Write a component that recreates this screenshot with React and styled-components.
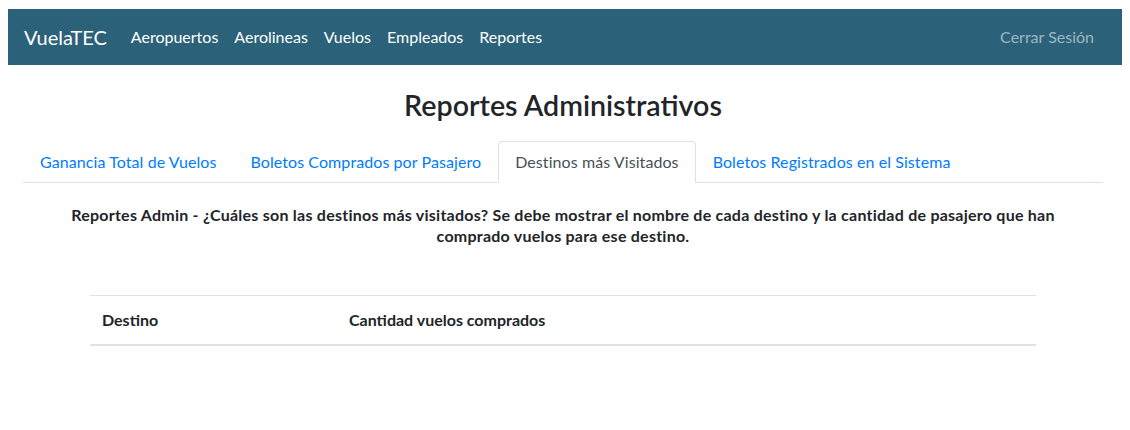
import React from "react";
import styled, { createGlobalStyle } from "styled-components";

const FONT = `Lato, "Noto Sans", "Liberation Sans", sans-serif`;

const Global = createGlobalStyle`
  body {
    margin: 8px;
    font-family: ${FONT};
    font-size: 16px;
    line-height: 1.5;
    color: #212529;
    background: #fff;
  }
  * { box-sizing: border-box; }
`;

const Navbar = styled.nav`
  display: flex;
  align-items: center;
  height: 56px;
  margin-top: 1px;
  padding: 0 20px 0 16px;
  background: #2b6279;
`;

const Brand = styled.a`
  font-size: 20px;
  color: #fff;
  margin-right: 16px;
  text-decoration: none;
  line-height: 1.5;
`;

const NavList = styled.div`
  display: flex;
  flex: 1;
`;

const NavLink = styled.a`
  padding: 8px;
  color: ${(p) => (p.$muted ? "rgba(255,255,255,0.55)" : "#fff")};
  text-decoration: none;
  margin-left: ${(p) => (p.$push ? "auto" : "0")};
`;

const Content = styled.main`
  padding: 0 19px 0 15px;
`;

const Title = styled.h3`
  margin: 23px 0 19px;
  text-align: center;
  font-size: 28.6px;
  font-weight: 600;
  line-height: 1.2;
`;

const Tabs = styled.div`
  display: flex;
  border-bottom: 1px solid #dee2e6;
`;

const Tab = styled.a`
  padding: 8px 16px;
  margin-bottom: -1px;
  border: 1px solid ${(p) => (p.$active ? "#dee2e6" : "transparent")};
  border-bottom-color: ${(p) => (p.$active ? "#fff" : "transparent")};
  border-radius: 4px 4px 0 0;
  background: ${(p) => (p.$active ? "#fff" : "transparent")};
  color: ${(p) => (p.$active ? "#495057" : "#007bff")};
  text-decoration: none;
  letter-spacing: 0.08px;
  line-height: 24px;
`;

const Description = styled.p`
  margin: 21px 30px 0;
  text-align: center;
  font-weight: 700;
  font-size: 16px;
  letter-spacing: 0.24px;
  line-height: 21px;
`;

const Table = styled.table`
  width: calc(100% - 134px);
  margin: 49px 67px 0;
  border-collapse: collapse;
`;

const Th = styled.th`
  text-align: left;
  padding: 12px;
  font-weight: 700;
  border-top: 1px solid #dee2e6;
  border-bottom: 2px solid #dee2e6;
  width: ${(p) => p.$w || "auto"};
  line-height: 24px;
`;

export default function App() {
  return (
    <>
      <Global />
      <Navbar>
        <Brand>VuelaTEC</Brand>
        <NavList>
          <NavLink>Aeropuertos</NavLink>
          <NavLink>Aerolineas</NavLink>
          <NavLink>Vuelos</NavLink>
          <NavLink>Empleados</NavLink>
          <NavLink>Reportes</NavLink>
          <NavLink $muted $push>Cerrar Sesión</NavLink>
        </NavList>
      </Navbar>
      <Content>
        <Title>Reportes Administrativos</Title>
        <Tabs>
          <Tab>Ganancia Total de Vuelos</Tab>
          <Tab>Boletos Comprados por Pasajero</Tab>
          <Tab $active>Destinos más Visitados</Tab>
          <Tab>Boletos Registrados en el Sistema</Tab>
        </Tabs>
        <Description>
          Reportes Admin - ¿Cuáles son las destinos más visitados? Se debe mostrar el nombre de cada destino y la cantidad de pasajero que han comprado vuelos para ese destino.
        </Description>
        <Table>
          <thead>
            <tr>
              <Th $w="247px">Destino</Th>
              <Th>Cantidad vuelos comprados</Th>
            </tr>
          </thead>
        </Table>
      </Content>
    </>
  );
}
